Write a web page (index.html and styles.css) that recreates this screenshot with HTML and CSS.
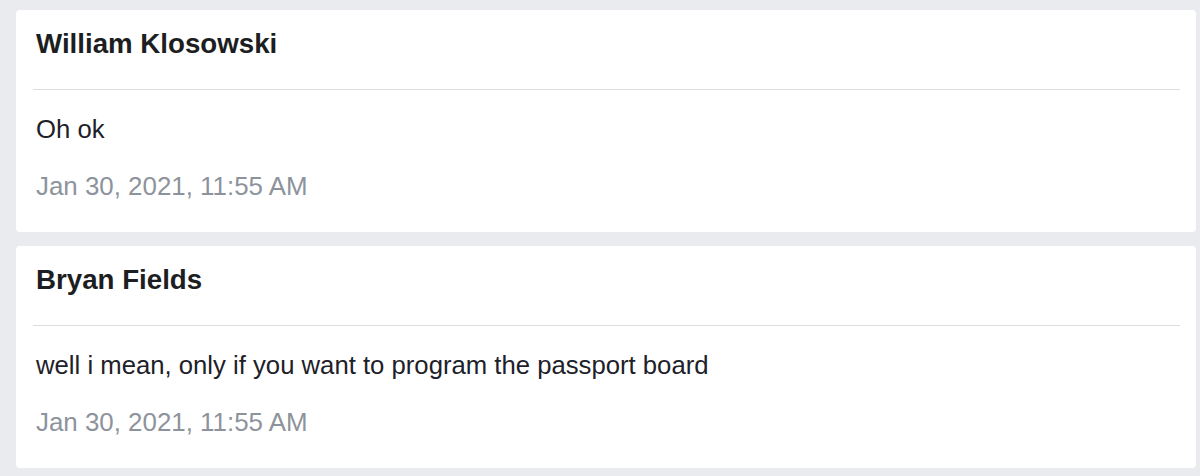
FILE: index.html
```html
<!DOCTYPE html>
<html lang="en">
<head>
<meta charset="utf-8">
<title>Messages</title>
<link rel="stylesheet" href="styles.css">
</head>
<body>
  <main class="thread">
    <article class="msg">
      <header class="msg-head">
        <h2 class="msg-name">William Klosowski</h2>
      </header>
      <p class="msg-body">Oh ok</p>
      <time class="msg-time">Jan 30, 2021, 11:55 AM</time>
    </article>
    <article class="msg">
      <header class="msg-head">
        <h2 class="msg-name">Bryan Fields</h2>
      </header>
      <p class="msg-body">well i mean, only if you want to program the passport board</p>
      <time class="msg-time">Jan 30, 2021, 11:55 AM</time>
    </article>
  </main>
</body>
</html>
```

FILE: styles.css
```css
html, body {
  margin: 0;
  padding: 0;
  background: #e9ebee;
}

body {
  font-family: "Liberation Sans", Arial, Helvetica, sans-serif;
  color: #1d2129;
}

.thread {
  display: flex;
  flex-direction: column;
  gap: 14px;
  padding: 10px 4px 0 16px;
}

.msg {
  background: #ffffff;
  border-radius: 4px;
  padding: 0 16px 31px 17px;
  display: flex;
  flex-direction: column;
  height: 222px;
  box-sizing: border-box;
}

.msg-head {
  padding: 18px 0 29px;
  border-bottom: 1px solid #dcdee2;
}

.msg-name {
  margin: 0;
  padding-left: 3px;
  font-size: 27.7px;
  line-height: 32px;
  font-weight: 700;
  color: #1c1e21;
}

.msg-body {
  margin: 24px 0 0;
  padding-left: 3px;
  font-size: 25.7px;
  line-height: 30px;
  color: #1d2129;
}

.msg-time {
  display: block;
  margin-top: 27px;
  padding-left: 3px;
  font-size: 25.9px;
  line-height: 30px;
  color: #8d939c;
}
```
